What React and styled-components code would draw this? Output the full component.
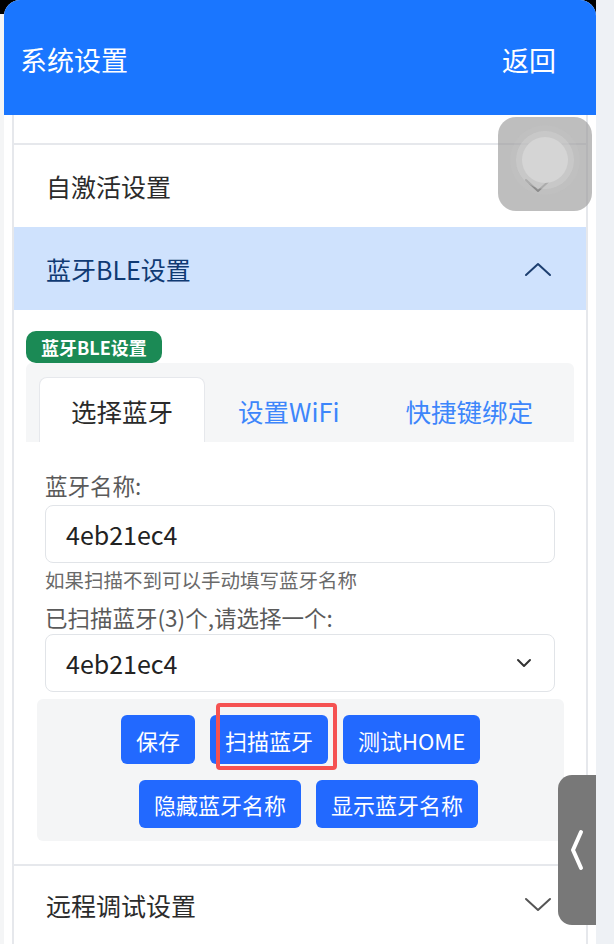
import React from "react";
import styled, { createGlobalStyle } from "styled-components";

const Global = createGlobalStyle`
  html, body { margin: 0; padding: 0; }
  body {
    background: #eef1f5;
    font-family: "Noto Sans CJK SC", "Noto Sans", sans-serif;
    overflow: hidden;
  }
  * { box-sizing: border-box; }
`;

const Screen = styled.div`
  width: 614px;
  height: 944px;
  display: flex;
  background: linear-gradient(#000 0, #000 14px, #f4f5f6 14px);
  overflow: hidden;
`;

const Frame = styled.div`
  position: relative;
  width: 592px;
  margin-left: 4px;
  height: 944px;
  background: #fff;
  border-radius: 16px 16px 0 0;
  display: flex;
  flex-direction: column;
`;

const RightStrip = styled.div`
  flex: 1;
  background: #eef1f5;
`;

const Header = styled.header`
  height: 115px;
  flex-shrink: 0;
  background: #1a76ff;
  border-radius: 16px 16px 0 0;
  display: flex;
  align-items: center;
  justify-content: space-between;
  padding: 4px 40px 0 16px;
  color: #fff;
  font-size: 27px;
`;

const Content = styled.div`
  padding: 0 8px;
  flex: 1;
  overflow: hidden;
`;

const Card = styled.div`
  border-left: 2px solid #e6e8ec;
  border-right: 2px solid #e6e8ec;
  background: #fff;
`;

const CutItem = styled.div`
  height: 30px;
  border-bottom: 2px solid #e6e8ec;
`;

const ItemHeader = styled.div`
  height: ${(p) => p.$h || 82}px;
  display: flex;
  align-items: center;
  justify-content: space-between;
  padding: 0 34px 0 32px;
  font-size: 25px;
  color: ${(p) => (p.$active ? "#0f3a73" : "#2b2b2b")};
  background: ${(p) => (p.$active ? "#cfe2fd" : "#fff")};
  border-top: ${(p) => (p.$border ? "2px solid #e6e8ec" : "none")};
`;

const Chevron = ({ up, color }) => (
  <svg width="28" height="16" viewBox="0 0 28 16" fill="none">
    <path
      d={up ? "M2 14 L14 3 L26 14" : "M2 2 L14 13 L26 2"}
      stroke={color}
      strokeWidth="2"
      strokeLinecap="round"
      strokeLinejoin="round"
    />
  </svg>
);

const Body = styled.div`
  padding: 21px 12px 23px 12px;
`;

const Badge = styled.div`
  display: inline-flex;
  align-items: center;
  background: #1b8a55;
  color: #fff;
  font-weight: 700;
  font-size: 18px;
  height: 32px;
  padding: 0 15px;
  border-radius: 10px;
  vertical-align: top;
`;

const Tabs = styled.div`
  background: #f5f6f7;
  border-radius: 6px 6px 0 0;
  padding: 14px 0 0 13px;
  display: flex;
  align-items: flex-end;
  height: 79px;
  overflow: hidden;
`;

const Tab = styled.div`
  flex-shrink: 0;
  white-space: nowrap;
  height: 65px;
  display: flex;
  align-items: center;
  justify-content: center;
  font-size: 25.5px;
  padding: 0 ${(p) => p.$px || 32}px;
  color: ${(p) => (p.$active ? "#2a2a2a" : "#3d86fb")};
  background: ${(p) => (p.$active ? "#fff" : "transparent")};
  border: ${(p) => (p.$active ? "1px solid #e6e8ec" : "1px solid transparent")};
  border-bottom: none;
  border-radius: 8px 8px 0 0;
`;

const Form = styled.div`
  padding: 30px 19px 0 19px;
  display: flex;
  flex-direction: column;
`;

const Label = styled.div`
  font-size: 22.5px;
  color: #5a5a5a;
  line-height: 26px;
  white-space: nowrap;
  margin-top: ${(p) => p.$mt || 0}px;
  margin-bottom: ${(p) => p.$mb || 7}px;
`;

const Field = styled.div`
  height: 58px;
  border: 1.5px solid #e1e4e8;
  border-radius: 8px;
  display: flex;
  align-items: center;
  justify-content: space-between;
  padding: 0 22px 0 20px;
  font-size: 25px;
  color: #222;
  background: #fff;
`;

const Help = styled.div`
  font-size: 19.5px;
  color: #6a6a6a;
  line-height: 20px;
  margin-top: 7px;
  white-space: nowrap;
`;

const ButtonArea = styled.div`
  margin: 7px 10px 0 11px;
  background: #f4f5f6;
  border-radius: 6px;
  padding: 16px 0 13px;
  display: flex;
  flex-direction: column;
  align-items: center;
  gap: 16px;
`;

const ButtonRow = styled.div`
  display: flex;
  gap: 15px;
  margin-left: ${(p) => p.$ml || 0}px;
`;

const Btn = styled.div`
  position: relative;
  height: ${(p) => p.$h || 49}px;
  padding: 0 15px;
  background: #2269ff;
  color: #fff;
  font-size: 22px;
  border-radius: 6px;
  display: flex;
  align-items: center;
  justify-content: center;
  white-space: nowrap;
`;

const Highlight = styled.div`
  position: absolute;
  left: 6px;
  top: -12px;
  right: -9px;
  bottom: -6px;
  border: 4px solid #f55252;
  border-radius: 4px;
  pointer-events: none;
`;

const FloatBall = styled.div`
  position: absolute;
  left: 494px;
  top: 117px;
  width: 94px;
  height: 94px;
  border-radius: 18px;
  background: rgba(150, 150, 150, 0.62);
  display: flex;
  align-items: flex-start;
  justify-content: center;
  padding-top: 20px;
`;

const BallInner = styled.div`
  width: 46px;
  height: 46px;
  border-radius: 50%;
  background: #d5d5d5;
  box-shadow: 0 0 0 6px rgba(210, 210, 210, 0.45), 0 0 0 12px rgba(200, 200, 200, 0.2);
`;

const SideTab = styled.div`
  position: absolute;
  left: 554px;
  top: 775px;
  width: 38px;
  height: 150px;
  background: #787878;
  border-radius: 14px 0 0 14px;
  display: flex;
  align-items: center;
  justify-content: center;
`;

export default function App() {
  return (
    <>
      <Global />
      <Screen>
        <Frame>
          <Header>
            <span>系统设置</span>
            <span>返回</span>
          </Header>
          <Content>
            <Card>
              <CutItem />
              <ItemHeader>
                <span>自激活设置</span>
                <Chevron color="#555" />
              </ItemHeader>
              <ItemHeader $active $h={83}>
                <span>蓝牙BLE设置</span>
                <Chevron up color="#1d3f70" />
              </ItemHeader>
              <Body>
                <Badge>蓝牙BLE设置</Badge>
                <Tabs>
                  <Tab $active $px={31}>选择蓝牙</Tab>
                  <Tab $px={32}>设置WiFi</Tab>
                  <Tab $px={32}>快捷键绑定</Tab>
                </Tabs>
                <Form>
                  <Label>蓝牙名称:</Label>
                  <Field>4eb21ec4</Field>
                  <Help>如果扫描不到可以手动填写蓝牙名称</Help>
                  <Label $mt={14} $mb={4}>已扫描蓝牙(3)个,请选择一个:</Label>
                  <Field>
                    <span>4eb21ec4</span>
                    <svg width="16" height="10" viewBox="0 0 16 10" fill="none">
                      <path d="M2 2 L8 8 L14 2" stroke="#333" strokeWidth="2" strokeLinecap="round" strokeLinejoin="round" />
                    </svg>
                  </Field>
                </Form>
                <ButtonArea>
                  <ButtonRow>
                    <Btn>保存</Btn>
                    <Btn>
                      扫描蓝牙
                      <Highlight />
                    </Btn>
                    <Btn>测试HOME</Btn>
                  </ButtonRow>
                  <ButtonRow $ml={16}>
                    <Btn $h={48}>隐藏蓝牙名称</Btn>
                    <Btn $h={48}>显示蓝牙名称</Btn>
                  </ButtonRow>
                </ButtonArea>
              </Body>
              <ItemHeader $border $h={80}>
                <span>远程调试设置</span>
                <Chevron color="#555" />
              </ItemHeader>
            </Card>
          </Content>
          <FloatBall>
            <BallInner />
          </FloatBall>
          <SideTab>
            <svg width="14" height="42" viewBox="0 0 14 42" fill="none">
              <path d="M11 3 L3 21 L11 39" stroke="#fff" strokeWidth="4" strokeLinecap="round" strokeLinejoin="round" />
            </svg>
          </SideTab>
        </Frame>
        <RightStrip />
      </Screen>
    </>
  );
}
